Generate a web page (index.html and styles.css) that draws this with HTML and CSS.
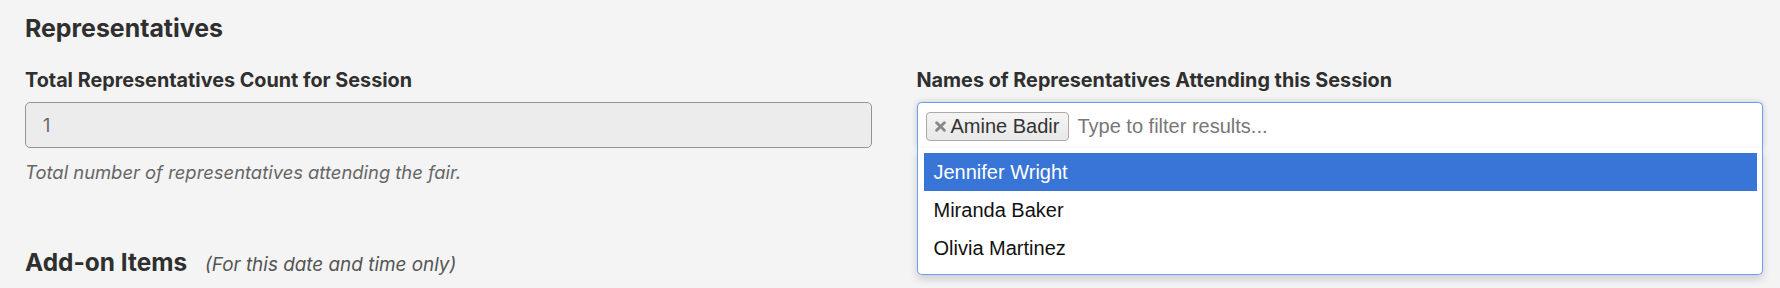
FILE: index.html
```html
<!DOCTYPE html>
<html lang="en">
<head>
<meta charset="utf-8">
<title>Representatives</title>
<link rel="stylesheet" href="styles.css">
</head>
<body>
<main class="page">
  <h2 class="section-title">Representatives</h2>
  <div class="fields">
    <div class="field">
      <label class="field-label">Total Representatives Count for Session</label>
      <div class="input input-readonly">1</div>
      <p class="help">Total number of representatives attending the fair.</p>
    </div>
    <div class="field">
      <label class="field-label">Names of Representatives Attending this Session</label>
      <div class="multiselect">
        <div class="ms-box">
          <span class="chip"><svg class="chip-x" viewBox="0 0 10 10" aria-hidden="true"><path d="M1.5 1.5 L8.5 8.5 M8.5 1.5 L1.5 8.5"/></svg>Amine Badir</span>
          <span class="ms-placeholder">Type to filter results...</span>
        </div>
        <ul class="ms-dropdown">
          <li class="ms-option is-highlighted">Jennifer Wright</li>
          <li class="ms-option">Miranda Baker</li>
          <li class="ms-option">Olivia Martinez</li>
        </ul>
      </div>
    </div>
  </div>
  <h2 class="addon-title">Add-on Items <span class="addon-note">(For this date and time only)</span></h2>
</main>
</body>
</html>
```

FILE: styles.css
```css
* { box-sizing: border-box; }

html, body {
  margin: 0;
  padding: 0;
  background: #f4f4f4;
}

body {
  font-family: Inter, "Noto Sans", "Liberation Sans", sans-serif;
  color: #333;
  width: 1780px;
  height: 288px;
  overflow: hidden;
}

.page {
  padding: 14px 17px 0 25px;
}

.section-title {
  margin: 0;
  font-size: 24.9px;
  line-height: 29px;
  font-weight: 700;
  color: #2f2f2f;
}

.fields {
  display: grid;
  grid-template-columns: 1fr 1fr;
  column-gap: 45px;
  margin-top: 26px;
}

.field {
  display: flex;
  flex-direction: column;
  min-width: 0;
}

.field-label {
  font-size: 19.8px;
  line-height: 22px;
  font-weight: 700;
  color: #2f2f2f;
  margin-bottom: 11px;
}

.input {
  height: 46px;
  display: flex;
  align-items: center;
  padding: 0 17px;
  font-size: 18px;
  border: 1px solid #949494;
  border-radius: 5px;
}

.input-readonly {
  background: #ececec;
  color: #666;
}

.help {
  margin: 12px 0 0;
  font-size: 18.4px;
  line-height: 24px;
  font-style: italic;
  color: #666;
}

.multiselect {
  position: relative;
  font-family: "Liberation Sans", Arial, sans-serif;
  font-size: 20px;
}

.ms-box {
  height: 46px;
  display: flex;
  align-items: center;
  gap: 8px;
  padding: 0 8px;
  background: #fff;
  border: 1px solid #6b9ff2;
  border-bottom: none;
  border-radius: 5px 5px 0 0;
  box-shadow: 0 0 6px rgba(0, 0, 0, 0.18);
}

.chip {
  display: inline-flex;
  align-items: center;
  height: 29px;
  margin-top: 1px;
  padding: 0 9px 0 8px;
  gap: 5px;
  background: linear-gradient(#f4f4f4, #e8e8e8);
  border: 1px solid #aaa;
  border-radius: 4px;
  color: #333;
  line-height: 1;
}

.chip-x {
  width: 11px;
  height: 11px;
  stroke: #888;
  stroke-width: 2.6;
  stroke-linecap: round;
  fill: none;
}

.ms-placeholder {
  color: #777;
  margin-top: 2px;
}

.ms-dropdown {
  position: absolute;
  top: 46px;
  left: 0;
  right: 0;
  margin: 0;
  list-style: none;
  padding: 5px 5px 7px 6px;
  background: #fff;
  border: 1px solid #6b9ff2;
  border-top: none;
  border-radius: 0 0 5px 5px;
  box-shadow: 0 4px 8px rgba(0, 0, 0, 0.16);
  z-index: 10;
}

.ms-option {
  height: 38px;
  padding: 8px 10px 0;
  line-height: 23px;
  color: #111;
}

.ms-option.is-highlighted {
  background: #3875d7;
  color: #fff;
}

.addon-title {
  margin: 64px 0 0;
  font-size: 24.4px;
  line-height: 28px;
  font-weight: 700;
  color: #2f2f2f;
}

.addon-note {
  font-size: 18.9px;
  font-weight: 400;
  font-style: italic;
  color: #555;
  margin-left: 12px;
}
```
